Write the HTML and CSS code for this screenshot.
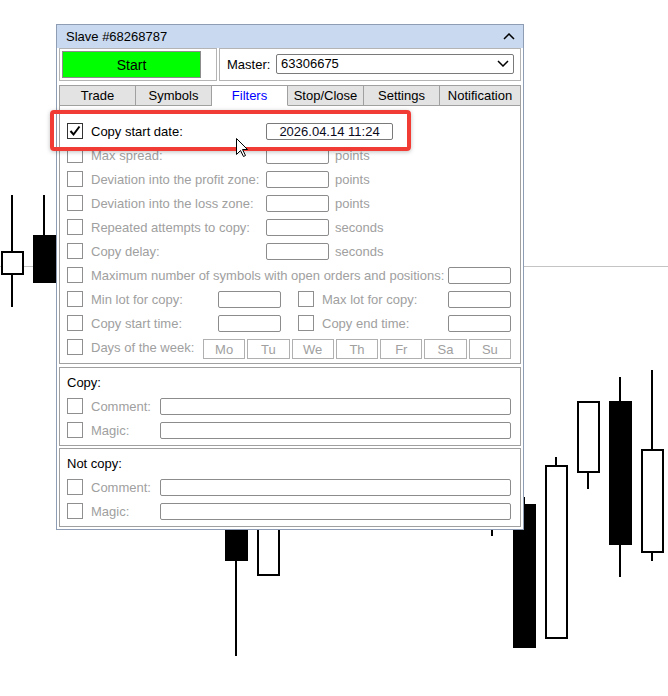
FILE: index.html
```html
<!DOCTYPE html>
<html lang="en">
<head>
	<meta charset="UTF-8">
	<meta name="viewport" content="width=device-width,initial-scale=1.0">
	<title>Slave #68268787</title>
	<link rel="stylesheet" href="styles.css">
</head>
<body>
	<!-- chart behind the panel -->
	<svg class="chart" width="668" height="696" viewBox="0 0 668 696" shape-rendering="crispEdges">
		<line class="level" x1="0" y1="266.5" x2="668" y2="266.5"/>
		<g class="wick">
			<line x1="12" y1="195" x2="12" y2="307"/>
			<line x1="44" y1="195" x2="44" y2="236"/>
			<line x1="236" y1="540" x2="236" y2="656"/>
			<line x1="492" y1="500" x2="492" y2="536"/>
			<line x1="524" y1="497" x2="524" y2="505"/>
			<line x1="556" y1="457" x2="556" y2="466"/>
			<line x1="588" y1="472" x2="588" y2="489"/>
			<line x1="620" y1="377" x2="620" y2="577"/>
			<line x1="652" y1="370" x2="652" y2="561"/>
		</g>
		<g class="up">
			<rect x="2" y="252" width="21" height="22"/>
			<rect x="258" y="481" width="21" height="94"/>
			<rect x="546" y="466" width="21" height="172"/>
			<rect x="578" y="402" width="21" height="70"/>
			<rect x="642" y="450" width="21" height="102"/>
		</g>
		<g class="down">
			<rect x="33" y="235" width="23" height="48"/>
			<rect x="225" y="480" width="23" height="81"/>
			<rect x="513" y="504" width="23" height="144"/>
			<rect x="609" y="401" width="23" height="144"/>
		</g>
	</svg>

	<div class="panel">
		<div class="panel-head">
			<span>Slave #68268787</span>
			<svg class="chev" width="12" height="7" viewBox="0 0 12 7"><polyline points="1,6 6,1 11,6"/></svg>
		</div>
		<div class="panel-body">
			<div class="top-row">
				<div class="frame start-frame">
					<button type="button" class="btn-start">Start</button>
				</div>
				<div class="frame master-frame">
					<span class="master-label">Master:</span>
					<div class="select">
						<span>63306675</span>
						<svg class="chev" width="12" height="7" viewBox="0 0 12 7"><polyline points="1,1 6,6 11,1"/></svg>
					</div>
				</div>
			</div>

			<div class="tabs">
				<div class="tab">Trade</div>
				<div class="tab">Symbols</div>
				<div class="tab active">Filters</div>
				<div class="tab">Stop/Close</div>
				<div class="tab">Settings</div>
				<div class="tab">Notification</div>
			</div>

			<div class="tab-page">
				<div class="row">
					<span class="cb checked"><svg width="14" height="14" viewBox="0 0 14 14"><polyline points="2.5,7 5.5,10.5 11.5,2.5"/></svg></span>
					<span class="lbl on">Copy start date:</span>
					<span class="field date">2026.04.14 11:24</span>
				</div>
				<div class="row">
					<span class="cb"></span>
					<span class="lbl">Max spread:</span>
					<span class="field"></span>
					<span class="unit">points</span>
				</div>
				<div class="row">
					<span class="cb"></span>
					<span class="lbl">Deviation into the profit zone:</span>
					<span class="field"></span>
					<span class="unit">points</span>
				</div>
				<div class="row">
					<span class="cb"></span>
					<span class="lbl">Deviation into the loss zone:</span>
					<span class="field"></span>
					<span class="unit">points</span>
				</div>
				<div class="row">
					<span class="cb"></span>
					<span class="lbl">Repeated attempts to copy:</span>
					<span class="field"></span>
					<span class="unit">seconds</span>
				</div>
				<div class="row">
					<span class="cb"></span>
					<span class="lbl">Copy delay:</span>
					<span class="field"></span>
					<span class="unit">seconds</span>
				</div>
				<div class="row">
					<span class="cb"></span>
					<span class="lbl wide">Maximum number of symbols with open orders and positions:</span>
					<span class="field"></span>
				</div>
				<div class="row">
					<span class="cb"></span>
					<span class="lbl short">Min lot for copy:</span>
					<span class="field"></span>
					<span class="cb second"></span>
					<span class="lbl right">Max lot for copy:</span>
					<span class="field"></span>
				</div>
				<div class="row">
					<span class="cb"></span>
					<span class="lbl short">Copy start time:</span>
					<span class="field"></span>
					<span class="cb second"></span>
					<span class="lbl right">Copy end time:</span>
					<span class="field"></span>
				</div>
				<div class="row">
					<span class="cb"></span>
					<span class="lbl days-lbl">Days of the week:</span>
					<div class="days">
						<span>Mo</span><span>Tu</span><span>We</span><span>Th</span><span>Fr</span><span>Sa</span><span>Su</span>
					</div>
				</div>
			</div>

			<div class="group">
				<div class="group-title">Copy:</div>
				<div class="row">
					<span class="cb"></span>
					<span class="lbl tiny">Comment:</span>
					<span class="field long"></span>
				</div>
				<div class="row">
					<span class="cb"></span>
					<span class="lbl tiny">Magic:</span>
					<span class="field long"></span>
				</div>
			</div>

			<div class="group">
				<div class="group-title">Not copy:</div>
				<div class="row">
					<span class="cb"></span>
					<span class="lbl tiny">Comment:</span>
					<span class="field long"></span>
				</div>
				<div class="row">
					<span class="cb"></span>
					<span class="lbl tiny">Magic:</span>
					<span class="field long"></span>
				</div>
			</div>
		</div>
	</div>

	<div class="highlight"></div>
	<svg class="cursor" width="13" height="20" viewBox="0 0 13 20"><polygon points="0.5,0.5 0.5,16.5 4.5,12.5 7.5,18.5 9.5,17.5 6.5,11.5 11.5,11.5"/></svg>
</body>
</html>
```

FILE: styles.css
```css
body{
	margin: 0;
	width: 668px;
	height: 696px;
	overflow: hidden;
	background-color: #fff;
	font-family: "Liberation Sans", Arial, sans-serif;
	font-size: 13px;
	color: #000;
}

/* chart */
.chart{
	position: absolute;
	left: 0;
	top: 0;
}
.chart .level{
	stroke: #c4c4c4;
	stroke-width: 1;
}
.chart .wick line{
	stroke: #000;
	stroke-width: 2;
}
.chart .up rect{
	fill: #fff;
	stroke: #000;
	stroke-width: 2;
}
.chart .down rect{
	fill: #000;
}

/* panel */
.panel{
	position: absolute;
	left: 56px;
	top: 24px;
	width: 466px;
	border: 1px solid #8e9db3;
	background-color: #fff;
}
.panel-head{
	height: 23px;
	padding: 0 8px 0 9px;
	background-color: #c9d9ef;
	display: flex;
	align-items: center;
	justify-content: space-between;
}
.chev polyline{
	fill: none;
	stroke: #000;
	stroke-width: 1.5;
}
.panel-body{
	padding: 0 2px 2px 2px;
}

.top-row{
	display: flex;
	gap: 2px;
	height: 33px;
}
.frame{
	box-sizing: border-box;
	border: 1px solid #b4b4b4;
	background-color: #fff;
}
.start-frame{
	width: 158px;
	padding: 2px;
}
.btn-start{
	display: block;
	width: 139px;
	height: 27px;
	margin: 0;
	padding: 0;
	border: 1px solid #8c8c8c;
	background-color: #00ff00;
	font-family: inherit;
	font-size: 14px;
	color: #000;
}
.master-frame{
	flex: 1;
	display: flex;
	align-items: center;
	padding-left: 7px;
}
.master-label{
	width: 49px;
}
.select{
	box-sizing: border-box;
	width: 238px;
	height: 20px;
	margin-top: -2px;
	border: 1px solid #7a7a7a;
	border-radius: 2px;
	padding: 0 4px 0 4px;
	display: flex;
	align-items: center;
	justify-content: space-between;
}

/* tabs */
.tabs{
	display: grid;
	grid-template-columns: 77px 76px 76px 76px 76px 1fr;
	margin-top: 4px;
	height: 21px;
}
.tab{
	box-sizing: border-box;
	border: 1px solid #a0a0a0;
	border-left: none;
	background-color: #e3e3e3;
	text-align: center;
	line-height: 19px;
}
.tab:first-child{
	border-left: 1px solid #a0a0a0;
}
.tab.active{
	background-color: #fff;
	border-bottom-color: #fff;
	color: #0000ff;
}

.tab-page{
	border: 1px solid #a0a0a0;
	border-top: none;
	padding: 13px 9px 4px 7px;
}
.row{
	display: flex;
	align-items: center;
	height: 24px;
}
.cb{
	box-sizing: border-box;
	width: 16px;
	height: 16px;
	border: 1px solid #8f8f8f;
	margin-right: 8px;
	flex: none;
}
.cb.checked{
	border-color: #333;
}
.cb svg{
	display: block;
	margin: 0;
}
.cb svg polyline{
	fill: none;
	stroke: #000;
	stroke-width: 2;
}
.cb.second{
	margin-left: 17px;
}
.lbl{
	width: 175px;
	color: #a0a0a0;
	white-space: nowrap;
	flex: none;
}
.lbl.on{
	color: #000;
}
.lbl.wide{
	width: 357px;
}
.lbl.short{
	width: 127px;
}
.lbl.right{
	width: 126px;
}
.lbl.days-lbl{
	width: 112px;
}
.lbl.tiny{
	width: 69px;
}
.field{
	box-sizing: border-box;
	width: 63px;
	height: 17px;
	border: 1px solid #8c8c8c;
	border-radius: 2px;
	flex: none;
}
.field.date{
	width: 127px;
	border-color: #7a7a7a;
	text-align: center;
	line-height: 15px;
	color: #0a0a1e;
}
.field.long{
	flex: 1;
}
.unit{
	margin-left: 6px;
	color: #a0a0a0;
}
.days{
	display: flex;
	gap: 2px;
	width: 309px;
	align-self: flex-end;
}
.days span{
	box-sizing: border-box;
	flex: 1;
	height: 20px;
	border: 1px solid #b0b0b0;
	color: #a0a0a0;
	text-align: center;
	line-height: 19px;
}

/* copy / not copy */
.group{
	border: 1px solid #a0a0a0;
	padding: 0 9px 3px 7px;
	margin-top: 3px;
}
.group + .group{
	margin-top: 2px;
}
.group-title{
	padding: 5px 0 1px 0;
	line-height: 20px;
}

/* overlays */
.highlight{
	position: absolute;
	left: 50px;
	top: 110px;
	width: 361px;
	height: 41px;
	box-sizing: border-box;
	border: 4px solid #f03c34;
	border-radius: 4px;
	box-shadow: 0 1px 4px rgba(0,0,0,.25);
}
.cursor{
	position: absolute;
	left: 236px;
	top: 138px;
}
.cursor polygon{
	fill: #fff;
	stroke: #000;
	stroke-width: 1;
}
```
